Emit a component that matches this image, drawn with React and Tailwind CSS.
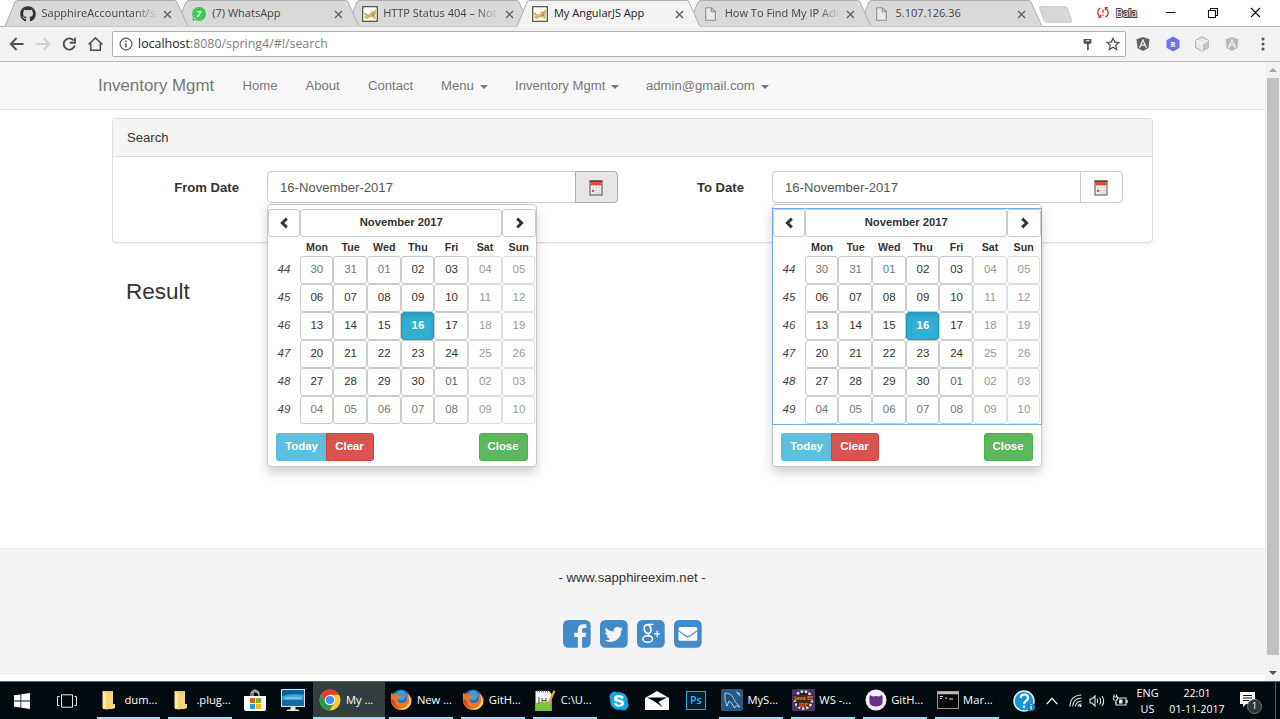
import React from "react";
import { FaGithub, FaAngular, FaWhatsapp, FaSkype } from "react-icons/fa";

/* ---------- browser tabs ---------- */

function TomcatIcon() {
  return (
    <svg width="16" height="16" viewBox="0 0 16 16" className="shrink-0">
      <rect x="0.7" y="0.7" width="14.6" height="14.6" fill="#fffef8" stroke="#4a4a45" strokeWidth="1.2" />
      <path d="M2 11l2.500-3 3 .5L9.500 5l1.500 1 2-2.500 1.500 1-.3 3-1 2 .8 3-2 .2-1.500-1.500-3 .3-3 1.800z" fill="#d9b566" />
      <path d="M2 7.500l2.500.8M10 8.500l2 1M11 6.500l1 .3" stroke="#6b5626" strokeWidth="0.8" />
    </svg>
  );
}

function PageIcon() {
  return (
    <svg width="11" height="14" viewBox="0 0 11 14" className="ml-0.5 mr-[3px] shrink-0">
      <path d="M.7.7h5.8l3.8 3.8v8.8H.7zM6.3.9v3.8h3.8" fill="#e9e9e9" stroke="#8f8f8f" strokeWidth="1.100" />
    </svg>
  );
}

function WhatsIcon() {
  return (
    <span className="relative flex size-4 shrink-0 items-center justify-center">
      <FaWhatsapp className="absolute inset-0 size-4 text-[#43c553]" />
      <span className="absolute top-[1px] left-[2px] size-[13px] rounded-full bg-[#43c553]" />
      <span className="relative text-[9px] leading-none font-bold text-white italic">7</span>
    </span>
  );
}

function Cross() {
  return (
    <svg width="9" height="9" viewBox="0 0 9 9">
      <path d="M1 1l7 7M8 1L1 8" stroke="#666" strokeWidth="1.5" />
    </svg>
  );
}

const TABS = [
  { title: "SapphireAccountant/sa", icon: <FaGithub className="size-4 shrink-0 text-[#333]" />, fade: true, z: "z-[5]" },
  { title: "(7) WhatsApp", icon: <WhatsIcon />, z: "z-[4]" },
  { title: "HTTP Status 404 – Not", icon: <TomcatIcon />, fade: true, z: "z-[3]" },
  { title: "My AngularJS App", icon: <TomcatIcon />, active: true, z: "z-[6]" },
  { title: "How To Find My IP Add", icon: <PageIcon />, fade: true, z: "z-[2]" },
  { title: "5.107.126.36", icon: <PageIcon />, z: "z-[1]" },
];

function Tab({ tab }) {
  return (
    <div className={"relative -mr-[12.200px] flex h-[27px] w-[183px] shrink-0 items-center pl-[15px] " + tab.z}>
      <svg className="absolute inset-0" width="183" height="27" viewBox="0 0 183 27">
        <path d="M0 26.5L10 2Q11 .5 13 .5H169Q171 .5 172 2L183 26.5" fill={tab.active ? "#f2f2f2" : "#d9d9d9"} stroke="#adadad" />
        {tab.active && <path d="M0 27h183" stroke="#f2f2f2" strokeWidth="2" />}
      </svg>
      <span className="relative flex items-center">{tab.icon}</span>
      <span className={"relative ml-[5.500px] w-[116px] overflow-hidden text-[11px] whitespace-nowrap" + (tab.active ? " text-[#222]" : " text-[#444]") + (tab.fade ? " [mask-image:linear-gradient(to_right,#000_80%,transparent)]" : "")}>
        {tab.title}
      </span>
      <span className="absolute top-[9.5px] left-[158px]"><Cross /></span>
    </div>
  );
}

function TabStrip() {
  return (
    <div className="flex h-[27px] border-b border-[#b3b3b3] bg-white pl-[5px]">
      {TABS.map((t) => <Tab key={t.title} tab={t} />)}
      <svg className="mt-[6px] ml-[9px] shrink-0" width="33" height="17" viewBox="0 0 33 17">
        <path d="M1 .7h24.5q2 0 3 2l4 11.5q.5 2-1.5 2H8q-2 0-3-2L.6 2.2Q.3 .7 2 .7z" fill="#d7d7d7" stroke="#c6c6c6" />
      </svg>
      <svg className="mt-[7px] ml-[25px] shrink-0" width="12" height="11" viewBox="0 0 12 11" fill="none" stroke="#d33a2f" strokeWidth="1.3">
        <path d="M3.600 1Q.8 2 .8 5.200T3.200 9.500M1 10.200h2.800V7.600M8.400 9.800q2.800-1 2.800-4T8.800 1.300M11 .6H8.300V3.200M6 2.500v3.500M6 7.300v1.400" />
      </svg>
      <span className="mt-[6px] ml-[7px] text-[10.500px] leading-[14px] text-white [-webkit-text-stroke:2px_#444] [paint-order:stroke_fill]">Bala</span>
      <svg className="mt-[7px] ml-[29px] shrink-0" width="96" height="12" viewBox="0 0 96 12" fill="none" stroke="#111" strokeWidth="1.1">
        <path d="M0 5.5h9.500M42.500 3.500h7v7h-7zM44.500 3.500V1.500h7v7h-2M85 1l9 9M94 1l-9 9" />
      </svg>
    </div>
  );
}

/* ---------- address bar ---------- */

function Hexagon({ children }) {
  return <svg width="16" height="16" viewBox="0 0 16 16">{children}</svg>;
}

function Toolbar() {
  return (
    <div className="flex h-[35px] items-center border-b border-[#b8b8b8] bg-[#f2f2f2] pl-[9px]">
      <svg width="96" height="16" viewBox="0 0 96 16" fill="none" stroke="#505050" strokeWidth="1.9" className="shrink-0">
        <path d="M14.500 8H2M7.500 2L1.800 8l5.700 6" />
        <path d="M27.500 8H40M34.500 2l5.700 6-5.700 6" stroke="#cfcfcf" />
        <path d="M64.500 4.300A5.600 5.600 0 1 0 65.700 9.500M66 1.800V6.800H60.800" />
        <path d="M79.500 8.500L86.500 1.800l7 6.700M81.700 7.500v6.700h9.600V7.500" strokeWidth="1.600" />
      </svg>
      <div className="ml-[7px] flex h-[26px] w-[1014px] shrink-0 items-center rounded-[2px] border border-[#b0b0b0] bg-white pl-[6px]">
        <svg width="14" height="14" viewBox="0 0 14 14" fill="none" stroke="#555" strokeWidth="1.2">
          <circle cx="7" cy="7" r="5.900" />
          <path d="M7 6.200v4.200M7 3.500v1.500" strokeWidth="1.500" />
        </svg>
        <span className="mt-px ml-[5px] grow text-[12.400px] text-[#808080]"><span className="text-[#222]">localhost</span>:8080/spring4/#!/search</span>
        <svg width="9" height="13" viewBox="0 0 9 13" className="mr-[14px]">
          <path d="M.5 1h8v4L7 6H5.800v6L4 12.500V6H2L.5 5z" fill="#555" />
          <path d="M3 2.700h3.500" stroke="#fff" />
        </svg>
        <svg width="14" height="14" viewBox="0 0 14 14" className="mr-[5px]">
          <path d="M7 1.200l1.700 3.900 4.200.4-3.200 2.800 1 4.200L7 10.300l-3.700 2.200 1-4.200L1.100 5.500l4.200-.4z" fill="none" stroke="#4d4d4d" strokeWidth="1.200" />
        </svg>
      </div>
      <div className="ml-[9px] flex w-[105px] items-center justify-between">
        <FaAngular className="size-[16px] text-[#626262]" />
        <Hexagon>
          <path d="M8 .5l6.500 3.700v7.600L8 15.500 1.500 11.800V4.200z" fill="#6f74ec" />
          <text x="8" y="10.800" textAnchor="middle" fontSize="7.500" fontWeight="700" fill="#fff" fontFamily="Open Sans">R</text>
        </Hexagon>
        <Hexagon>
          <path d="M8 .8l6.300 3.600v7.200L8 15.200 1.700 11.600V4.400z" fill="#e8e8e8" stroke="#a5a5a5" />
          <path d="M8 8v7l6-3.500V4.800z" fill="#c6c6c6" /><path d="M2 4.500L8 8l6-3.500M8 8v7" stroke="#fff" fill="none" />
        </Hexagon>
        <FaAngular className="size-[16px] text-[#bcbcbc]" />
      </div>
      <svg width="4" height="14" viewBox="0 0 4 14" className="ml-[21px]" fill="#505050">
        <circle cx="2" cy="2" r="1.500" /><circle cx="2" cy="7" r="1.500" /><circle cx="2" cy="12" r="1.500" />
      </svg>
    </div>
  );
}

/* ---------- page ---------- */

function Caret() {
  return <span className="mt-[2px] ml-[6px] inline-block border-x-[4px] border-t-[4px] border-x-transparent border-t-[#777]" />;
}

function NavBar() {
  return (
    <nav className="flex h-[48px] items-center border-b border-[#e7e7e7] bg-[#f8f8f8] pl-[98px] text-[13.120px] text-[#777]">
      <span className="w-[144.500px] text-[16.870px]">Inventory Mgmt</span>
      <span className="w-[63px]">Home</span>
      <span className="w-[62.500px]">About</span>
      <span className="w-[73px]">Contact</span>
      <span className="flex w-[74px] items-center">Menu<Caret /></span>
      <span className="flex w-[131px] items-center">Inventory Mgmt<Caret /></span>
      <span className="flex items-center">admin@gmail.com<Caret /></span>
    </nav>
  );
}

function CalendarIcon() {
  return (
    <svg width="14" height="16" viewBox="0 0 14 16" className="mt-[2px] mr-[1.500px]">
      <rect x="1" y="1" width="12" height="14" fill="#f5f3f2" stroke="#6f6563" strokeWidth="1.200" />
      <path d="M.5.5h13v1.800H.5z" fill="#5a3f3b" />
      <path d="M1.600 2.200h10.800v3.200H1.600z" fill="#da4c31" />
      <path d="M6.500 8h2M9.500 8h2M6.500 10.500h2M9.500 10.500h2M6.500 13h2M9.500 13h2M3 8h2" stroke="#bbb" strokeWidth="1.200" />
      <path d="M3 9.800l2 2.200M5 9.800l-2 2.200" stroke="#d9452b" strokeWidth="1.100" />
    </svg>
  );
}

function Chevron({ right }) {
  return (
    <svg width="10" height="12" viewBox="0 0 10 12" className={right ? "ml-[2px] rotate-180" : "ml-px"}>
      <path d="M7.800 1.600L3.300 6l4.500 4.400" fill="none" stroke="#333" strokeWidth="2.900" />
    </svg>
  );
}

const DAYS = ["Mon", "Tue", "Wed", "Thu", "Fri", "Sat", "Sun"];
const WEEKS = [
  [44, ["30", "31", "01", "02", "03", "04", "05"]],
  [45, ["06", "07", "08", "09", "10", "11", "12"]],
  [46, ["13", "14", "15", "16", "17", "18", "19"]],
  [47, ["20", "21", "22", "23", "24", "25", "26"]],
  [48, ["27", "28", "29", "30", "01", "02", "03"]],
  [49, ["04", "05", "06", "07", "08", "09", "10"]],
];

function dayClass(row, col, day) {
  if (row === 2 && col === 3) return "border-[#269abc] bg-[#31b0d5] font-bold text-white shadow-[inset_0_3px_5px_rgba(0,0,0,0.125)]";
  if (col > 4) return "border-[#dedede] text-[#999]";
  if (row === 0 && day === "01") return "border-[#ccc] text-[#5f7f9b]";
  if ((row === 0 && col < 2) || row === 5) return "border-[#ccc] text-[#777]";
  if (row === 4 && col === 4) return "border-[#ccc] text-[#666]";
  return "border-[#ccc] text-[#333]";
}

function Picker({ focused }) {
  return (
    <div className="absolute top-[32.500px] left-[-0.500px] z-10 h-[263px] w-[270px] rounded-[4px] border border-[#c8c8c8] bg-white pt-[4px] text-[11.250px] text-[#333] shadow-[0_6px_11px_rgba(0,0,0,0.19)]">
      <div className={"h-[215px] w-[268px] " + (focused ? "outline outline-[#7ea6ea]" : "")}>
        <div className="flex h-[28px]">
          <div className="flex w-[32px] items-center justify-center rounded-[3px] border border-[#ccc]"><Chevron /></div>
          <div className="flex w-[202.500px] items-center justify-center rounded-[3px] border border-[#ccc] pl-px font-bold">November 2017</div>
          <div className="flex w-[33.500px] items-center justify-center rounded-[3px] border border-[#ccc]"><Chevron right /></div>
        </div>
        <div className="flex h-[19px] items-center pl-[32.800px] text-[10.700px] font-bold">
          {DAYS.map((d) => <span key={d} className="w-[33.700px] pt-[2px] text-center">{d}</span>)}
        </div>
        {WEEKS.map(([no, days], r) => (
          <div key={no} className="flex h-[28px]">
            <span className="w-[32px] pt-[5px] pl-px text-center text-[11.500px] leading-[16px] text-[#444] italic">{no}</span>
            {days.map((d, c) => (
              <span key={c} className={"flex w-[33.700px] shrink-0 items-center justify-center rounded-[3px] border pl-px text-[11.500px] " + dayClass(r, c, d)}>{d}</span>
            ))}
          </div>
        ))}
      </div>
      <div className="mt-[9.500px] flex h-[28px] pr-[8px] pl-[8px] text-[11.400px] font-bold text-white">
        <span className="flex w-[50px] items-center justify-center rounded-l-[3px] bg-[#5bc0de] pl-[2px]">Today</span>
        <span className="flex w-[48px] items-center justify-center rounded-r-[3px] border border-[#d43f3a] bg-[#d9534f]">Clear</span>
        <span className="ml-auto flex w-[49px] items-center justify-center rounded-[3px] border border-[#4cae4c] bg-[#5cb85c]">Close</span>
      </div>
    </div>
  );
}

function DateField({ label, labelWidth, active, focused }) {
  return (
    <div className="flex">
      <span className={"pt-[7px] pr-[28px] text-right font-bold leading-[20px] " + labelWidth}>{label}</span>
      <div className="relative flex h-[32px] w-[351px] text-[#555]">
        <span className="flex grow items-center rounded-l-[4px] border border-[#ccc] bg-white pt-px pl-[12px]">16-November-2017</span>
        <span className={"-ml-px flex w-[43px] items-center justify-center rounded-r-[4px] border " + (active ? "border-[#adadad] bg-[#e6e6e6]" : "border-[#ccc] bg-white")}><CalendarIcon /></span>
        <Picker focused={focused} />
      </div>
    </div>
  );
}

function SearchPanel() {
  return (
    <section className="mt-[8px] ml-[112px] h-[125px] w-[1041px] rounded-[4px] border border-[#ddd] bg-white shadow-[0_1px_1px_rgba(0,0,0,0.05)]">
      <div className="flex h-[38px] items-center rounded-t-[3px] border-b border-[#ddd] bg-[#f5f5f5] pl-[14px]">Search</div>
      <div className="flex pt-[14px]">
        <DateField label="From Date" labelWidth="w-[154px]" active />
        <DateField label="To Date" labelWidth="w-[154px]" focused />
      </div>
    </section>
  );
}

function Footer() {
  return (
    <footer className="flex h-[126px] shrink-0 flex-col items-center border-y border-y-[#e9e9e9] bg-[#f4f4f4] pt-[19px]">
      <p className="pr-px leading-[20px]">- www.sapphireexim.net -</p>
      <div className="mt-[32px] flex gap-[9.500px] text-[#428bca]">
        <svg width="27.700" height="27.700" viewBox="128 128 1536 1536" fill="currentColor">
          <path d="M1376 128q119 0 203.500 84.500t84.500 203.500v960q0 119-84.500 203.500t-203.500 84.500h-188v-595h199l30-232h-229v-148q0-56 23.500-84t91.500-28l122-1v-207q-63-9-178-9-136 0-217.500 80t-81.500 226v171h-200v232h200v595h-532q-119 0-203.500-84.500t-84.500-203.500v-960q0-119 84.500-203.500t203.500-84.500h960z" />
        </svg>
        <svg width="27.700" height="27.700" viewBox="128 128 1536 1536" fill="currentColor">
          <path d="M1408 610q-56 25-121 34 68-40 93-117-65 38-134 51-61-66-153-66-87 0-148.500 61.500t-61.500 148.500q0 29 5 48-129-7-242-65t-192-155q-29 50-29 106 0 114 91 175-47-1-100-26v2q0 75 50 133.500t123 72.500q-29 8-51 8-13 0-39-4 21 63 74.500 104t121.500 42q-116 90-261 90-26 0-50-3 148 94 322 94 112 0 210-35.500t168-95 120.500-137 75-162 24.500-168.500q0-18-1-27 63-45 105-109zm256-194v960q0 119-84.500 203.500t-203.500 84.500h-960q-119 0-203.500-84.500t-84.500-203.500v-960q0-119 84.500-203.500t203.500-84.500h960q119 0 203.500 84.500t84.500 203.500z" />
        </svg>
        <svg width="27.700" height="27.700" viewBox="0 0 28 28">
          <rect width="28" height="28" rx="5.200" fill="currentColor" />
          <g fill="none" stroke="#fff">
            <ellipse cx="10.700" cy="9.200" rx="3.400" ry="4.400" strokeWidth="1.700" transform="rotate(-16 10.700 9.200)" />
            <path d="M10.500 4.600h6M12.300 13.300q-1.800 1.600.8 3" strokeWidth="1.400" />
            <ellipse cx="10.800" cy="19.200" rx="4.900" ry="3.300" strokeWidth="1.500" />
            <path d="M17.300 14h6.200M20.400 10.900v6.200" strokeWidth="1.300" />
          </g>
        </svg>
        <svg width="27.700" height="27.700" viewBox="0 0 28 28">
          <rect width="28" height="28" rx="5.200" fill="currentColor" />
          <rect x="4.500" y="7" width="19" height="14" rx="1.600" fill="#fff" />
          <path d="M4 10.500l7.500 5.400q2.500 1.700 5 0l7.500-5.400" fill="none" stroke="currentColor" strokeWidth="1.200" />
        </svg>
      </div>
    </footer>
  );
}

function ScrollBar() {
  return (
    <div className="flex w-[15px] shrink-0 flex-col items-center justify-between bg-[#f1f1f1] pt-[6px] pb-[6px]">
      <span className="border-x-[4px] border-b-[4px] border-x-transparent border-b-[#a3a3a3]" />
      <span className="mt-[6px] mb-[16px] w-[12px] grow bg-[#c1c1c1]" />
      <span className="border-x-[4px] border-t-[4px] border-x-transparent border-t-[#505050]" />
    </div>
  );
}

/* ---------- taskbar ---------- */

const Folder = () => (
  <svg width="16" height="20" viewBox="0 0 16 20"><path d="M2 1h10v13l2 1v3l-3 1H2z" fill="#f0cc69" /><path d="M1.500 1l3.500 2v16.500l-3.500-1.500z" fill="#ffe7a0" /><path d="M5 3h7v11h2v4l-9 1.500z" fill="#f6d67c" /></svg>
);
const Chrome = () => (
  <svg width="22" height="22" viewBox="0 0 22 22">
    <circle cx="11" cy="11" r="10.500" fill="#fcc934" />
    <path d="M1.900 5.800A10.500 10.500 0 0 1 20.100 5.800H11L6.500 13.500z" fill="#e33b2e" />
    <path d="M1.900 5.800A10.500 10.500 0 0 0 10.500 21.500l5-8L6.500 13.500z" fill="#279b4a" />
    <circle cx="11" cy="11" r="5.300" fill="#fff" /><circle cx="11" cy="11" r="4.100" fill="#4a8af4" />
  </svg>
);
const Firefox = () => (
  <svg width="22" height="22" viewBox="0 0 22 22">
    <circle cx="11" cy="10" r="9.500" fill="#1c6fb8" /><circle cx="11" cy="6.500" r="5" fill="#3c9fdc" />
    <path d="M1 4q1.500 1 3 .5Q7 4 8 6l3 1q-1 2-3 2.500Q7 12 9.500 13.500q3 1 6-1Q18 9 16 4q4 2 4 6 1-2 .5-4Q23 12 19 17.500 14 22.500 7.500 20.500 .5 17.500 .8 10z" fill="#e8742a" />
    <path d="M17.500 5q4 7-1 12-3 3-8 3 9 2.500 12.500-5Q22.500 9 17.500 5z" fill="#f9d24a" />
    <path d="M1 10q1 7 8 9-4-3-5-8z" fill="#c9431c" />
  </svg>
);
const Notepad = () => (
  <svg width="22" height="23" viewBox="0 0 22 23"><path d="M1.500 2H15l2.500 3v17h-16z" fill="#f3f5ee" /><path d="M1.500 14q8-2 16-1v9h-16z" fill="#79c63a" /><path d="M3 2.500h11" stroke="#888" strokeDasharray="1 1" strokeWidth="2" /><path d="M5 8v7M8 9v4M8 11.500h4M12 9v4" stroke="#555" /><path d="M19.500 1l-6 13-1 3.500 3-2.500 6-12.500z" fill="#e2a13a" /></svg>
);
const MySql = () => (
  <svg width="22" height="22" viewBox="0 0 22 22"><rect width="22" height="22" rx="2" fill="#285a83" /><path d="M6 17Q3 10 4 4q6 0 8.500 5.500Q13.500 13 19 18l-4-1.500L13.500 19Q11 13 8 12z" fill="#234f76" stroke="#dbe9f4" strokeWidth=".8" /><path d="M14.500 2l5 2.500-1 .5 1.500 2.500-3-2z" fill="#9ed0ec" /></svg>
);
const JavaIde = () => (
  <svg width="23" height="22" viewBox="0 0 23 22"><rect width="23" height="22" rx="1" fill="#48336b" /><circle cx="11.500" cy="11" r="8.500" fill="#2b2020" stroke="#ddd" strokeWidth="2.500" strokeDasharray="2.500 1.600" /><path d="M1 6h21v5.500H1zM5 12h12v6H5z" fill="#4b2a1c" /><g fill="#f07f2c" fontFamily="Open Sans" fontWeight="700"><text x="11.500" y="10.500" fontSize="5.500" textAnchor="middle">Java EE</text><text x="11.300" y="18.300" fontSize="5.500" textAnchor="middle">IDE</text></g></svg>
);
const Cat = () => (
  <svg width="22" height="22" viewBox="0 0 22 22"><circle cx="11" cy="11" r="10.500" fill="#f1edf6" /><path d="M5 6l3 1.500q3-1 6 0L17 6q1 3 .5 4.500 1 7-6.500 7t-6.500-7Q4 9 5 6z" fill="#64328c" /></svg>
);
const Console = () => (
  <svg width="22" height="18" viewBox="0 0 22 18"><rect x=".5" y=".5" width="21" height="17" fill="#090909" stroke="#999" /><path d="M1 2h20" stroke="#bcbcbc" strokeWidth="2.500" /><path d="M3 5.500h3M3 7.500h2M8 7h2M12 8h4" stroke="#ddd" /></svg>
);
const Store = () => (
  <svg width="22" height="23" viewBox="0 0 22 23"><path d="M7 8V5q0-3 4-4 4 1 4 4v3M9 7V3.500q3-2 5 1" fill="none" stroke="#ddd" strokeWidth="1.100" /><path d="M0 7h22v13q0 2-2 2H2q-2 0-2-2z" fill="#fff" /><path d="M6 9h5v5H6z" fill="#e65a26" /><path d="M12 9h5v5h-5z" fill="#7cb52a" /><path d="M6 15h5v5H6z" fill="#1d9fe0" /><path d="M12 15h5v5h-5z" fill="#f5b715" /></svg>
);
const Monitor = () => (
  <svg width="24" height="23" viewBox="0 0 24 23"><rect x=".5" y=".5" width="23" height="17" fill="#0f6ea8" stroke="#d3e1e9" /><path d="M1.500 1.500h21v4q-11-2-21 1z" fill="#0b5f97" /><path d="M1.500 7q10-3 21-1v5h-21z" fill="#3aa9d6" /><path d="M4 9h16" stroke="#e8f6fc" strokeWidth="1.100" strokeDasharray="1.500 .6" /><path d="M9.500 18h5v2.500h3l1 1.500h-13l1-1.500h3z" fill="#dfe5e8" /></svg>
);
const Mail = () => (
  <svg width="24" height="19" viewBox="0 0 24 19"><path d="M0 7L12 0l12 7v12H0z" fill="#fff" /><path d="M2 6.500h20L13.500 11l4.500 5.500L9.500 10.500z" fill="#06090b" /></svg>
);

function TaskButton({ children, label, active }) {
  return (
    <div className={"flex h-full shrink-0 " + (active ? "w-[72px] bg-[#343e41]" : "w-[71.900px] px-[4px]")}>
      <div className={"flex w-full items-center border-b-2 border-[#9fdcf0] pt-[1px] " + (active ? "pl-[6px]" : "pl-[1px]")}>
        <span className="flex w-[23px] shrink-0 justify-center">{children}</span>
        <span className="ml-[4px] text-[11.200px] whitespace-nowrap text-white">{label}</span>
      </div>
    </div>
  );
}

function Pin({ children }) {
  return <div className="flex h-full w-[38.300px] shrink-0 items-center justify-center pr-px">{children}</div>;
}

function TaskBar() {
  return (
    <div className="flex h-[38px] items-center border-t border-[#5a6163] bg-[#010b0f] text-white">
      <div className="flex w-[44px] shrink-0 justify-center">
        <svg width="16" height="16" viewBox="0 0 16 16" fill="#fff"><path d="M0 2.300L6.500 1.400V7.500H0zM7.300 1.300L16 0V7.500H7.300zM0 8.400H6.500V14.600L0 13.700zM7.300 8.400H16V16L7.300 14.700z" /></svg>
      </div>
      <div className="flex w-[48.500px] shrink-0 justify-center pr-[2px]">
        <svg width="20" height="14" viewBox="0 0 20 14" fill="none" stroke="#e8e8e8"><path d="M4.500 .8h11v12.400h-11zM2.500 2.500h-2v9h2M17.500 2.500h2v9h-2" /></svg>
      </div>
      <TaskButton label="dum..."><Folder /></TaskButton>
      <TaskButton label=".plug..."><Folder /></TaskButton>
      <Pin><Store /></Pin>
      <Pin><Monitor /></Pin>
      <TaskButton label="My ..." active><Chrome /></TaskButton>
      <TaskButton label="New ..."><Firefox /></TaskButton>
      <TaskButton label="GitH..."><Firefox /></TaskButton>
      <TaskButton label="C:\U..."><Notepad /></TaskButton>
      <Pin><FaSkype className="size-[22px] rounded-full text-[#14a9e6] [background:radial-gradient(#fff_45%,transparent_47%)]" /></Pin>
      <Pin><Mail /></Pin>
      <Pin><span className="flex h-[19px] w-[20px] items-center justify-center border border-[#25a7dc] bg-[#06202f] text-[10.500px] leading-none font-semibold text-[#31bdf5]">Ps</span></Pin>
      <TaskButton label="MyS..."><MySql /></TaskButton>
      <TaskButton label="WS -..."><JavaIde /></TaskButton>
      <TaskButton label="GitH..."><Cat /></TaskButton>
      <TaskButton label="Mar..."><Console /></TaskButton>
      <svg className="ml-[10px] shrink-0" width="22" height="22" viewBox="0 0 22 22"><circle cx="11" cy="11" r="10" fill="#1795d4" stroke="#e6f3fa" strokeWidth="1.500" /><path d="M7.500 8q.5-3.500 4-3.500T15 8q0 2-2 3t-2 3M11 15.500v2.300" fill="none" stroke="#fff" strokeWidth="2.200" /><circle cx="18" cy="17" r="4" fill="#1684bd" /><path d="M18 16v3.500M18 14v1" stroke="#fff" strokeWidth="1.300" /></svg>
      <svg className="ml-[11px] shrink-0" width="12" height="8" viewBox="0 0 12 8" fill="none" stroke="#e6e6e6" strokeWidth="1.300"><path d="M.8 7L6 1.200 11.200 7" /></svg>
      <svg className="ml-[11px] shrink-0" width="13" height="13" viewBox="0 0 13 13" fill="none" stroke="#ddd" strokeWidth="1.100"><path d="M1 12.500Q1 1.500 12.500 1M3.700 12.500Q4 4.500 12.500 4M6.500 12.500Q7 7.500 12.500 7M9 12.500q.5-2.500 3.500-2.500" /><circle cx="11.500" cy="12" r=".6" /></svg>
      <svg className="ml-[7px] shrink-0" width="16" height="12" viewBox="0 0 16 12" fill="none" stroke="#e6e6e6" strokeWidth="1.100"><path d="M1 4h2l3-3v10L3 8H1zM8 4q1.200 2 0 4M10.500 2.500q2.300 3.500 0 7M13 1q3.300 5 0 10" /></svg>
      <svg className="ml-[7px] shrink-0" width="16" height="13" viewBox="0 0 16 13" fill="none" stroke="#e6e6e6" strokeWidth="1.100"><path d="M6 4h8v7H4V8M15.200 6v3" /><path d="M1 3h4.500v2L4 6.500v3M2 .500V3M4.500 .500V3M1 4l1.500 2.500" /><path d="M7 5.500h3.500v4H7z" fill="#eee" stroke="none" /></svg>
      <div className="ml-[5px] w-[29px] shrink-0 text-center text-[10.800px] leading-[16px]">ENG<br />US</div>
      <div className="ml-[4px] w-[62px] shrink-0 text-center text-[10.600px] leading-[16px] whitespace-nowrap">22:01<br />01-11-2017</div>
      <div className="relative ml-[12px] h-[24px] w-[24px] shrink-0">
        <svg width="16" height="16" viewBox="0 0 16 16" className="absolute top-[3px] left-0"><path d="M0 0h15v12H6l-3 3v-3H0z" fill="#fff" /><path d="M3 3.500h9M3 6h9M3 8.500h6" stroke="#0a1114" /></svg>
        <span className="absolute top-[10px] left-[7px] flex size-[15px] items-center justify-center rounded-full border border-[#777] bg-[#2f3538] text-[9.500px] leading-none">1</span>
      </div>
      <span className="mr-[4px] ml-auto h-full w-px bg-[#4a5356]" />
    </div>
  );
}

export default function App() {
  return (
    <div className="flex h-[719px] w-[1280px] flex-col overflow-hidden bg-white font-['Open_Sans','Noto_Sans',sans-serif]">
      <TabStrip />
      <Toolbar />
      <main className="flex min-h-0 grow font-['Liberation_Sans',Arial,sans-serif] text-[13.120px] text-[#333]">
        <div className="flex w-[1265px] flex-col">
          <NavBar />
          <SearchPanel />
          <h2 className="mt-[36px] ml-[126px] grow text-[22.500px] leading-[25px]">Result</h2>
          <Footer />
          <div className="h-[7px] shrink-0" />
        </div>
        <ScrollBar />
      </main>
      <TaskBar />
    </div>
  );
}
